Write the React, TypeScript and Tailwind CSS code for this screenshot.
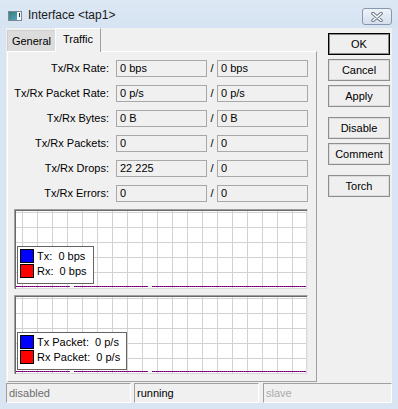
import React from "react";

function Field({ v }: { v: string }) {
  return (
    <div className="w-[91px] h-[17px] border border-[#a8a8a8] pl-[3px] leading-[15px] text-[11px] text-black whitespace-pre">
      {v}
    </div>
  );
}

function Row({ label, a, b }: { label: string; a: string; b: string }) {
  return (
    <div className="flex items-center h-[17px]">
      <div className="w-[102px] text-right pr-[1px] text-[11px] text-black">{label}</div>
      <div className="ml-[6px]">
        <Field v={a} />
      </div>
      <div className="w-[10px] text-center text-[11px] text-black">/</div>
      <Field v={b} />
    </div>
  );
}

function GridSvg({ w, h, id }: { w: number; h: number; id: string }) {
  const vs: number[] = [];
  for (let x = 6; x < w; x += 15) vs.push(x);
  const hs: number[] = [];
  for (let y = 1; y < h - 3; y += 15) hs.push(y);
  const segs: [number, number][] = [
    [0, 54],
    [58, 132],
    [136, w],
  ];
  const y = h - 2;
  return (
    <svg width={w} height={h} className="block" shapeRendering="crispEdges">
      <defs>
        <pattern id={id} x="0" y="0" width="2" height="1" patternUnits="userSpaceOnUse">
          <rect x="0" y="0" width="1" height="1" fill="#0000ff" />
          <rect x="1" y="0" width="1" height="1" fill="#ff0000" />
        </pattern>
      </defs>
      <rect x={0} y={0} width={w} height={h} fill="#ffffff" />
      {vs.map((x) => (
        <rect key={"v" + x} x={x} y={0} width={1} height={h} fill="#d2d2d2" />
      ))}
      {hs.map((yy) => (
        <rect key={"h" + yy} x={0} y={yy} width={w} height={1} fill="#d2d2d2" />
      ))}
      {segs.map(([a, b]) => (
        <rect key={a} x={a} y={y} width={b - a} height={1} fill={`url(#${id})`} />
      ))}
    </svg>
  );
}

function Swatch({ color }: { color: string }) {
  return <div className="w-[14px] h-[14px] border border-black" style={{ backgroundColor: color }} />;
}

function Graph({ h, tx, rx, id }: { h: number; tx: string; rx: string; id: string }) {
  const innerH = h - 3;
  return (
    <div
      className="ml-[6px] w-[294px] border-t border-l border-[#a0a0a0] border-r border-b border-r-[#e8e8e8] border-b-[#e8e8e8]"
      style={{ height: h }}
    >
      <div className="relative border-t border-l border-[#696969] border-r-0 border-b-0 w-[292px]" style={{ height: h - 1 }}>
        <div className="relative border-r border-b border-[#d8d8d8] w-[291px]" style={{ height: innerH + 1 }}>
          <GridSvg w={290} h={innerH} id={id} />
          <div className="absolute left-[1px] top-[35px] bg-white border border-[#646464] pl-[2px] pr-[6px] pt-[2px] pb-[5px] flex flex-col gap-[1px]">
            <div className="flex items-center h-[14px] gap-[3px]">
              <Swatch color="#0000ff" />
              <span className="text-[11px] leading-[14px] text-black whitespace-pre">{tx}</span>
            </div>
            <div className="flex items-center h-[14px] gap-[3px]">
              <Swatch color="#ff0000" />
              <span className="text-[11px] leading-[14px] text-black whitespace-pre">{rx}</span>
            </div>
          </div>
        </div>
      </div>
    </div>
  );
}

function Btn({ label, def }: { label: string; def?: boolean }) {
  return (
    <div
      className={
        "w-[62px] h-[22px] flex items-center justify-center text-[11px] text-black bg-[#efefef] " +
        (def ? "border border-black shadow-[inset_0_0_0_1px_#8a8a8a]" : "border border-[#8e8e8e] shadow-[inset_0_0_0_1px_#dcdcdc]")
      }
    >
      {label}
    </div>
  );
}

export default function App() {
  return (
    <div className="w-[398px] h-[409px] bg-[#d9e5f2] flex flex-col font-['Liberation_Sans',Arial,sans-serif] select-none overflow-hidden">
      {/* Title bar */}
      <div className="h-[28px] flex items-start bg-[linear-gradient(to_bottom,#dde8f5,#d6e3f1)]">
        <svg width="14" height="10" className="mt-[11px] ml-[8px]" shapeRendering="crispEdges">
          <defs>
            <linearGradient id="ig" x1="0" y1="0" x2="1" y2="1">
              <stop offset="0" stopColor="#2f7f6a" />
              <stop offset="1" stopColor="#6aa8d8" />
            </linearGradient>
          </defs>
          <rect x="0.5" y="0.5" width="13" height="9" fill="url(#ig)" stroke="#7a8796" />
          <rect x="9" y="1" width="4" height="8" fill="#f4f7fb" />
          <rect x="11" y="2" width="1" height="4" fill="#2b2b2b" />
        </svg>
        <div className="ml-[6px] mt-[8px] text-[12px] leading-[15px] text-[#1a1a1a]">Interface &lt;tap1&gt;</div>
        <div className="ml-auto mr-[6px] mt-[8px] w-[30px] h-[17px] rounded-[3px] border border-[#8797b0] bg-[linear-gradient(to_bottom,#eef3fa,#d6dfec)] flex items-center justify-center">
          <svg width="12" height="10" viewBox="0 0 12 10">
            <path d="M2 1.5 L10 8.5 M10 1.5 L2 8.5" stroke="#6f7a88" strokeWidth="3.6" strokeLinecap="round" />
            <path d="M2 1.5 L10 8.5 M10 1.5 L2 8.5" stroke="#ffffff" strokeWidth="1.6" strokeLinecap="round" />
          </svg>
        </div>
      </div>

      {/* Body */}
      <div className="flex-1 mx-[6px] mb-[6px] bg-[#f0f0f0] flex flex-col">
        <div className="flex">
          {/* Left: tabs + panel */}
          <div className="ml-[1px] w-[310px] flex flex-col">
            <div className="h-[23px] flex items-end">
              <div className="w-[48px] h-[21px] bg-[#dcdcdc] border-l border-t border-[#cfcfcf] flex items-center justify-center text-[11px] text-black">
                General
              </div>
              <div className="relative z-10 w-[46px] h-[24px] -mb-px bg-[#f0f0f0] border-l border-t border-white border-r border-r-[#a0a0a0] flex items-center justify-center text-[11px] text-black pb-[2px]">
                Traffic
              </div>
            </div>
            <div className="h-[331px] border-t border-l border-white border-r border-b border-r-[#a0a0a0] border-b-[#a0a0a0] pt-[8px] flex flex-col">
              <div className="flex flex-col gap-[8px]">
                <Row label="Tx/Rx Rate:" a="0 bps" b="0 bps" />
                <Row label="Tx/Rx Packet Rate:" a="0 p/s" b="0 p/s" />
                <Row label="Tx/Rx Bytes:" a="0 B" b="0 B" />
                <Row label="Tx/Rx Packets:" a="0" b="0" />
                <Row label="Tx/Rx Drops:" a="22 225" b="0" />
                <Row label="Tx/Rx Errors:" a="0" b="0" />
              </div>
              <div className="mt-[7px]">
                <Graph h={80} tx={"Tx:  0 bps"} rx={"Rx:  0 bps"} id="p1" />
              </div>
              <div className="mt-[6px]">
                <Graph h={79} tx={"Tx Packet:  0 p/s"} rx={"Rx Packet:  0 p/s"} id="p2" />
              </div>
            </div>
          </div>

          {/* Right: buttons */}
          <div className="ml-[11px] pt-[5px] flex flex-col">
            <Btn label="OK" def />
            <div className="mt-[4px]">
              <Btn label="Cancel" />
            </div>
            <div className="mt-[4px]">
              <Btn label="Apply" />
            </div>
            <div className="mt-[10px]">
              <Btn label="Disable" />
            </div>
            <div className="mt-[4px]">
              <Btn label="Comment" />
            </div>
            <div className="mt-[10px]">
              <Btn label="Torch" />
            </div>
          </div>
        </div>

        {/* Status bar */}
        <div className="mt-[1px] h-[20px] flex gap-[3px]">
          <div className="w-[125px] h-[20px] border-t border-l border-[#a0a0a0] border-r border-b border-r-white border-b-white pl-[2px] text-[11px] leading-[18px] text-[#6d6d6d]">
            disabled
          </div>
          <div className="w-[125px] h-[20px] border-t border-l border-[#a0a0a0] border-r border-b border-r-white border-b-white pl-[2px] text-[11px] leading-[18px] text-black">
            running
          </div>
          <div className="flex-1 ml-[1px] h-[20px] border-t border-l border-[#a0a0a0] border-r border-b border-r-white border-b-white pl-[2px] text-[11px] leading-[18px] text-[#ababab]">
            slave
          </div>
        </div>
      </div>
    </div>
  );
}
